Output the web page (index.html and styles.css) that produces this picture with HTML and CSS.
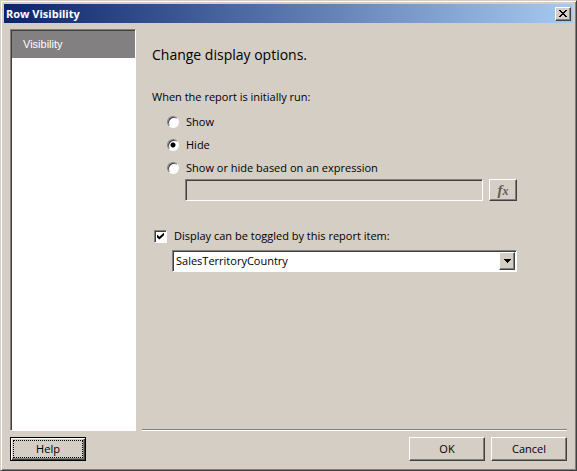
FILE: index.html
```html
<!DOCTYPE html>
<html lang="en">
<head>
<meta charset="utf-8">
<title>Row Visibility</title>
<link rel="stylesheet" href="styles.css">
</head>
<body>
<div class="window">
  <header class="titlebar">
    <h1 class="title">Row Visibility</h1>
    <button class="close" type="button" aria-label="Close">
      <svg width="8" height="7" viewBox="0 0 8 7" shape-rendering="crispEdges"><path d="M0 0h2v1h1v1h2v-1h1v-1h2v1h-1v1h-1v1h-1v1h1v1h1v1h1v1h-2v-1h-1v-1h-2v1h-1v1h-2v-1h1v-1h1v-1h1v-1h-1v-1h-1v-1h-1z"/></svg>
    </button>
  </header>
  <form class="dialog">
    <div class="body">
      <nav class="pages"><a class="page" href="#visibility">Visibility</a></nav>
      <main class="panel" id="visibility">
        <h2 class="heading">Change display options.</h2>
        <fieldset class="options">
          <legend class="legend">When the report is initially run:</legend>
          <label class="option"><input class="radio" type="radio" name="initial"><span>Show</span></label>
          <label class="option"><input class="radio" type="radio" name="initial" checked><span>Hide</span></label>
          <label class="option"><input class="radio" type="radio" name="initial"><span>Show or hide based on an expression</span></label>
          <div class="expression">
            <input class="field" type="text" aria-label="Expression" disabled>
            <button class="button fx" type="button" aria-label="Edit expression" disabled><i>f</i><i class="sub">x</i></button>
          </div>
        </fieldset>
        <label class="toggle"><input class="check" type="checkbox" checked><span>Display can be toggled by this report item:</span></label>
        <div class="combo">
          <select class="select" aria-label="Report item"><option>SalesTerritoryCountry</option></select>
          <span class="arrow"><svg width="7" height="4" viewBox="0 0 7 4" shape-rendering="crispEdges"><path d="M0 0h7v1h-1v1h-1v1h-1v1h-1v-1h-1v-1h-1v-1h-1z"/></svg></span>
        </div>
      </main>
    </div>
    <footer class="actions">
      <button class="button focused" type="button"><span class="focus">Help</span></button>
      <button class="button ok" type="button">OK</button>
      <button class="button" type="button">Cancel</button>
    </footer>
  </form>
</div>
</body>
</html>
```
FILE: styles.css
```css
* {
  box-sizing: border-box;
}

body {
  margin: 0;
  color: #000;
  font: 11px/16px "Open Sans", "Noto Sans", sans-serif;
}

input,
select,
button {
  margin: 0;
  padding: 0;
  border-radius: 0;
  color: inherit;
  font: inherit;
  appearance: none;
}

.window {
  display: flex;
  flex-direction: column;
  min-height: 100vh;
  padding: 2px;
  border: 1px solid;
  border-color: #d5cec5 #404040 #404040 #d5cec5;
  background: #d5cec5;
  box-shadow: inset 1px 1px #fff, inset -1px -1px #808080;
}

.titlebar {
  display: flex;
  align-items: center;
  justify-content: space-between;
  height: 19px;
  margin: 1px;
  padding: 0 2px;
  background: linear-gradient(90deg, #0a246a, #a6caf0);
}

.title {
  margin: 0;
  color: #fff;
  font: bold 11px/18px "Open Sans", "Noto Sans", sans-serif;
}

.close,
.button,
.arrow {
  border: 1px solid;
  border-color: #fff #404040 #404040 #fff;
  background: #d5cec5;
  box-shadow: inset -1px -1px #808080;
}

.close {
  display: flex;
  align-items: center;
  justify-content: center;
  width: 16px;
  height: 14px;
}

.dialog {
  display: flex;
  flex: 1;
  flex-direction: column;
  gap: 6px;
  padding: 5px 7px 7px;
}

.body {
  display: flex;
  flex: 1;
  gap: 6px;
}

.pages,
.field,
.combo {
  border: 1px solid;
  border-color: #808080 #fff #fff #808080;
  box-shadow: inset 1px 1px #404040;
}

.pages {
  width: 126px;
  padding: 1px 0 0 1px;
  background: #fff;
}

.page {
  display: block;
  padding: 5px 11px 6px;
  background: #828080;
  color: #fff;
  font-family: "Liberation Sans", Arial, sans-serif;
  text-decoration: none;
}

.panel {
  flex: 1;
  padding: 14px 50px 0 10px;
  border-bottom: 1px solid #fff;
  box-shadow: inset 0 -1px #808080;
}

.heading {
  margin: 0 0 22px;
  font-size: 14px;
  font-weight: 400;
  line-height: 24px;
}

.options {
  margin: 0;
  padding: 0;
  border: 0;
}

.legend {
  margin-bottom: 5px;
  padding: 0;
}

.option {
  display: flex;
  align-items: center;
  gap: 7px;
  height: 23px;
  margin-left: 15px;
}

.radio {
  width: 12px;
  height: 12px;
  border: 1px solid;
  border-color: #808080 #fff #fff #808080;
  border-radius: 50%;
  background: #fff;
  box-shadow: inset 1px 1px #404040;
}

.radio:checked {
  background: radial-gradient(circle, #000 2px, #fff 3px);
}

.expression {
  display: flex;
  gap: 6px;
  margin-left: 33px;
}

.field {
  flex: 1;
  min-width: 0;
  height: 22px;
  background: #d5cec5;
}

.button {
  width: 76px;
  height: 24px;
}

.fx {
  width: 28px;
  height: 22px;
  color: #605c58;
  font: bold 15px/16px "Liberation Serif", serif;
}

.sub {
  font-size: 12px;
}

.toggle {
  display: flex;
  align-items: center;
  gap: 7px;
  margin: 27px 0 6px 2px;
}

.check {
  display: grid;
  place-items: center;
  width: 13px;
  height: 13px;
  border: 1px solid;
  border-color: #808080 #fff #fff #808080;
  background: #fff;
  box-shadow: inset 1px 1px #404040;
}

.check:checked::before {
  width: 7px;
  height: 7px;
  background: #000;
  clip-path: polygon(0 30%, 35% 60%, 100% 0, 100% 40%, 35% 100%, 0 70%);
  content: "";
}

.combo {
  display: flex;
  position: relative;
  height: 22px;
  margin-left: 20px;
  background: #fff;
}

.select {
  flex: 1;
  min-width: 0;
  padding: 0 20px 0 3px;
  border: 0;
  background: transparent;
}

.arrow {
  display: flex;
  position: absolute;
  top: 1px;
  right: 1px;
  bottom: 1px;
  align-items: center;
  justify-content: center;
  width: 16px;
  pointer-events: none;
}

.actions {
  display: flex;
  gap: 6px;
}

.ok {
  margin-left: auto;
}

.focused {
  padding: 2px;
  border-color: #000;
  box-shadow: inset 1px 1px #fff, inset -1px -1px #404040, inset -2px -2px #808080;
}

.focus {
  display: block;
  border: 1px dotted #000;
}
```
